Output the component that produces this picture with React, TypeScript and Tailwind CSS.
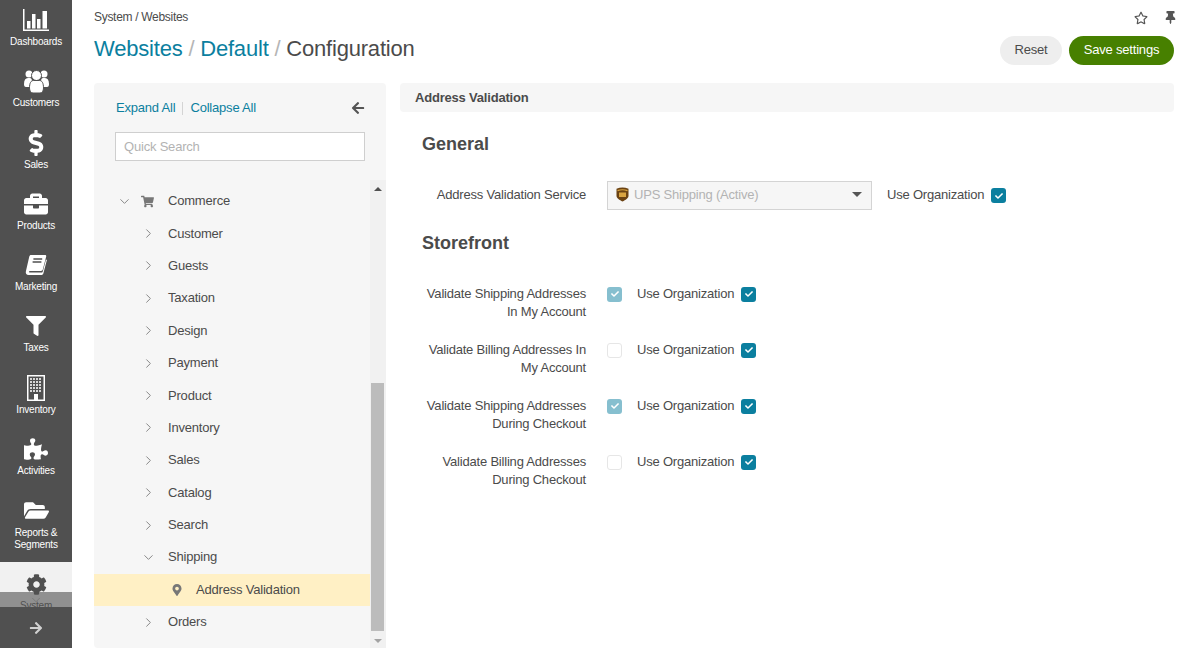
import React from 'react';
import {
  FaDollarSign,
  FaBriefcase,
  FaFilter,
  FaPuzzlePiece,
  FaFolderOpen,
  FaCog,
  FaArrowRight,
  FaArrowLeft,
  FaRegStar,
  FaThumbtack,
  FaShoppingCart,
  FaMapMarkerAlt,
  FaCheck,
} from 'react-icons/fa';
import { ChevronDown, ChevronRight } from 'lucide-react';

const ChartIcon = () => (
  <svg width="27" height="24" viewBox="0 0 27 24" fill="#fff">
    <rect x="0" y="1" width="1.5" height="22" />
    <rect x="0" y="21.5" width="26" height="1.5" />
    <rect x="4" y="13" width="3.5" height="7.5" />
    <rect x="9" y="6" width="3.5" height="14.5" />
    <rect x="14" y="11" width="3.5" height="9.5" />
    <rect x="19.5" y="3" width="4.5" height="17.5" />
  </svg>
);

const UsersIcon = () => (
  <svg width="25" height="23" viewBox="0 0 25 23" fill="#fff">
    <circle cx="5" cy="4" r="3.5" />
    <circle cx="20" cy="4" r="3.5" />
    <path d="M0 14c0-4 1.500-6 4-6h2c1 0 2 1 2 3v6H2c-1.500 0-2-1-2-3z" />
    <path d="M25 14c0-4-1.500-6-4-6h-2c-1 0-2 1-2 3v6h6c1.500 0 2-1 2-3z" />
    <circle cx="12.500" cy="5.500" r="5" stroke="#505050" strokeWidth="1" />
    <path
      d="M5.500 18c0-5 1.500-7.500 4-7.500h6c2.500 0 4 2.500 4 7.500 0 3-1.500 5-3.500 5H9c-2 0-3.500-2-3.500-5z"
      stroke="#505050"
      strokeWidth="1"
    />
  </svg>
);

const BookIcon = () => (
  <svg width="22" height="22" viewBox="0 0 22 22">
    <path
      d="M6 1h14c1 0 1.400.7 1.200 1.600l-3.400 13c-.3 1-.9 1.400-1.800 1.400H5c-1.200 0-1.600 1.600-.2 1.600h11.400c.8 0 1.300-.4 1.600-1.200l3.200-12 .9.6-3.500 13.200c-.3 1-1 1.800-2.200 1.800H3.600C1.600 21 .3 19.300.9 17.200L4.300 2.600C4.600 1.600 5 1 6 1z"
      fill="#fff"
    />
    <path d="M8.400 5h8.800M7.600 8h8.800" stroke="#505050" strokeWidth="1.300" />
  </svg>
);

const BuildingIcon = () => (
  <svg width="18" height="26" viewBox="0 0 18 26">
    <rect x="0" y="0" width="18" height="26" fill="#fff" />
    <rect x="1.500" y="1.500" width="15" height="23" fill="#505050" />
    {[3, 6, 9, 12, 15].map((y) =>
      [3, 6, 9, 12].map((x) => <rect key={`${x}-${y}`} x={x} y={y} width="2" height="2" fill="#d6d6d6" />)
    )}
    <rect x="7" y="19" width="4" height="6" fill="#fff" />
  </svg>
);

const UpsIcon = () => (
  <svg width="13" height="15" viewBox="0 0 13 15">
    <path d="M.5 1.800C4.500.2 8.500.2 12.500 1.800v7c0 2.600-3 4.300-6 5.700-3-1.400-6-3.100-6-5.700z" fill="#6b4212" />
    <path d="M1.500 3.600C4.500 2.600 8.500 2.600 11.500 3.600" stroke="#d9a441" strokeWidth="1.200" fill="none" />
    <rect x="3" y="5.500" width="7" height="4.500" fill="#d9a441" />
  </svg>
);

const navItems: { label: string; icon: React.ReactNode }[] = [
  { label: 'Dashboards', icon: <ChartIcon /> },
  { label: 'Customers', icon: <UsersIcon /> },
  { label: 'Sales', icon: <FaDollarSign size={26} /> },
  { label: 'Products', icon: <FaBriefcase size={24} /> },
  { label: 'Marketing', icon: <BookIcon /> },
  { label: 'Taxes', icon: <FaFilter size={20} /> },
  { label: 'Inventory', icon: <BuildingIcon /> },
  { label: 'Activities', icon: <FaPuzzlePiece size={24} /> },
];

const treeItems = ['Customer', 'Guests', 'Taxation', 'Design', 'Payment', 'Product', 'Inventory', 'Sales', 'Catalog', 'Search'];

const storefrontRows: { lines: [string, string]; checked: boolean }[] = [
  { lines: ['Validate Shipping Addresses', 'In My Account'], checked: true },
  { lines: ['Validate Billing Addresses In', 'My Account'], checked: false },
  { lines: ['Validate Shipping Addresses', 'During Checkout'], checked: true },
  { lines: ['Validate Billing Addresses', 'During Checkout'], checked: false },
];

const CheckBox = ({ tone }: { tone: 'solid' | 'muted' | 'empty' }) => {
  if (tone === 'empty') {
    return <span className="block w-[15px] h-[15px] shrink-0 rounded-[3px] border border-[#e6e6e6] bg-white" />;
  }
  return (
    <span
      className={`flex items-center justify-center w-[15px] h-[15px] shrink-0 rounded-[3px] text-white ${
        tone === 'solid' ? 'bg-[#0b7f9f]' : 'bg-[#86bfcf]'
      }`}
    >
      <FaCheck size={8} />
    </span>
  );
};

const UseOrganization = ({ raised }: { raised?: boolean }) => (
  <div className="flex items-center gap-[7px]">
    <span className={raised ? 'pb-[2px]' : ''}>Use Organization</span>
    <CheckBox tone="solid" />
  </div>
);

const TreeRow = ({ label }: { label: string }) => (
  <div className="flex items-center h-[32.4px]">
    <ChevronRight size={15} strokeWidth={1.5} className="ml-[47px] mr-[12px] text-[#808080]" />
    <span>{label}</span>
  </div>
);

export default function App() {
  return (
    <div className="flex h-screen w-full overflow-hidden bg-white text-[13px] leading-[18px] tracking-[-0.2px] text-[#4b4b4b] font-['Liberation_Sans',Arial,sans-serif]">
      <aside className="relative w-[72px] shrink-0 bg-[#505050] text-white overflow-hidden text-[10px] leading-[12px]">
        <div className="flex flex-col pt-[6px]">
          {navItems.map((item) => (
            <div key={item.label} className="flex flex-col items-center h-[61.25px]">
              <div className="flex items-center justify-center h-[28px]">{item.icon}</div>
              <div className="mt-[2px]">{item.label}</div>
            </div>
          ))}
          <div className="flex flex-col items-center h-[66px]">
            <div className="flex items-center justify-center h-[28px]">
              <FaFolderOpen size={25} />
            </div>
            <div className="mt-[3px] text-center">
              Reports &
              <br />
              Segments
            </div>
          </div>
          <div className="flex flex-col items-center h-[80px] pt-[12px] bg-[#f1f1f1] text-[#505050]">
            <FaCog size={21} />
            <div className="mt-[5px]">System</div>
          </div>
        </div>
        <div className="absolute left-0 right-0 top-[592px] h-[15px] flex items-center justify-center bg-[#505050]/60 text-[#777]">
          <ChevronDown size={14} strokeWidth={1.5} />
        </div>
        <div className="absolute left-0 right-0 bottom-0 h-[41px] flex items-center justify-center bg-[#505050] text-[#d0d0d0]">
          <FaArrowRight size={14} />
        </div>
      </aside>

      <main className="flex flex-col flex-1 min-w-0 pl-[22px] pr-[19px]">
        <header className="flex justify-between h-[83px]">
          <div>
            <div className="mt-[9px] text-[12px] leading-[16px] tracking-[-0.3px]">System / Websites</div>
            <h1 className="mt-[9px] text-[22px] leading-[30px]">
              <span className="text-[#0b7f9f]">Websites</span>
              <span className="text-[#b5b5b5]"> / </span>
              <span className="text-[#0b7f9f]">Default</span>
              <span className="text-[#b5b5b5]"> / </span>
              <span>Configuration</span>
            </h1>
          </div>
          <div className="flex flex-col items-end">
            <div className="flex items-center gap-[16px] h-[17px] mt-[9px] mr-[-3px] text-[#555]">
              <FaRegStar size={14} />
              <FaThumbtack size={13} />
            </div>
            <div className="flex gap-[7px] mt-[10px]">
              <button className="h-[29px] w-[62px] pb-[2px] rounded-full bg-[#eeeeee] text-[#4b4b4b]">Reset</button>
              <button className="h-[29px] w-[105px] pb-[2px] rounded-full bg-[#478000] text-white">Save settings</button>
            </div>
          </div>
        </header>

        <div className="flex flex-1 min-h-0 gap-[14px]">
          <section className="relative flex flex-col w-[292px] shrink-0 rounded-[4px] bg-[#f6f6f6]">
            <div className="px-[21px] pt-[16px]">
              <div className="flex items-center justify-between h-[18px]">
                <div className="flex items-center pl-[1px] text-[#0b7f9f]">
                  <span>Expand All</span>
                  <span className="mx-[7px] w-px h-[13px] bg-[#d4d4d4]" />
                  <span>Collapse All</span>
                </div>
                <FaArrowLeft size={14} className="text-[#555]" />
              </div>
              <div className="mt-[15px] flex items-center h-[29px] px-[8px] border border-[#cfcfcf] bg-white text-[#b3b3b3]">
                Quick Search
              </div>
            </div>
            <div className="flex flex-1 min-h-0 mt-[19px]">
              <div className="flex-1 min-w-0 pt-[5px]">
                <div className="flex items-center h-[32.4px]">
                  <ChevronDown size={15} strokeWidth={1.5} className="ml-[23px] text-[#808080]" />
                  <FaShoppingCart size={13} className="ml-[9px] text-[#777]" />
                  <span className="ml-[14px]">Commerce</span>
                </div>
                {treeItems.map((label) => (
                  <TreeRow key={label} label={label} />
                ))}
                <div className="flex items-center h-[32.4px]">
                  <ChevronDown size={15} strokeWidth={1.5} className="ml-[47px] mr-[12px] text-[#808080]" />
                  <span>Shipping</span>
                </div>
                <div className="flex items-center h-[32.4px] bg-[#fff0c5]">
                  <FaMapMarkerAlt size={12} className="ml-[77px] mr-[13px] text-[#777]" />
                  <span>Address Validation</span>
                </div>
                <TreeRow label="Orders" />
              </div>
              <div className="relative w-[16px] shrink-0 bg-[#f1f1f1]">
                <span className="absolute left-[4px] top-[7px] border-x-[4px] border-b-[4px] border-x-transparent border-b-[#505050]" />
                <div className="absolute left-[1px] right-[2px] top-[203px] h-[248px] bg-[#bcbcbc]" />
                <span className="absolute left-[4px] bottom-[5px] border-x-[4px] border-t-[4px] border-x-transparent border-t-[#a3a3a3]" />
              </div>
            </div>
          </section>

          <section className="flex-1 min-w-0">
            <div className="flex items-center h-[29px] px-[15px] rounded-[4px] bg-[#f6f6f6] font-bold">
              Address Validation
            </div>
            <div className="pl-[22px]">
              <h2 className="mt-[22px] text-[18px] leading-[20px] tracking-normal font-bold">General</h2>
              <div className="flex items-center mt-[27px]">
                <div className="w-[164px] pb-[2px] text-right">Address Validation Service</div>
                <div className="flex items-center justify-between ml-[21px] w-[265px] h-[29px] pl-[8px] pr-[9px] pb-[2px] border border-[#d4d4d4] bg-[#f6f6f6] text-[#b3b3b3]">
                  <div className="flex items-center gap-[5px]">
                    <UpsIcon />
                    <span>UPS Shipping (Active)</span>
                  </div>
                  <span className="border-x-[5px] border-t-[5px] border-x-transparent border-t-[#555]" />
                </div>
                <div className="ml-[15px]">
                  <UseOrganization raised />
                </div>
              </div>
              <h2 className="mt-[23px] text-[18px] leading-[20px] tracking-normal font-bold">Storefront</h2>
              <div className="mt-[32px]">
                {storefrontRows.map((row) => (
                  <div key={row.lines.join(' ')} className="flex h-[56px]">
                    <div className="w-[164px] shrink-0 text-right whitespace-nowrap">
                      {row.lines[0]}
                      <br />
                      {row.lines[1]}
                    </div>
                    <div className="flex items-center h-[18px] ml-[21px]">
                      <CheckBox tone={row.checked ? 'muted' : 'empty'} />
                      <div className="ml-[15px]">
                        <UseOrganization />
                      </div>
                    </div>
                  </div>
                ))}
              </div>
            </div>
          </section>
        </div>
      </main>
    </div>
  );
}
